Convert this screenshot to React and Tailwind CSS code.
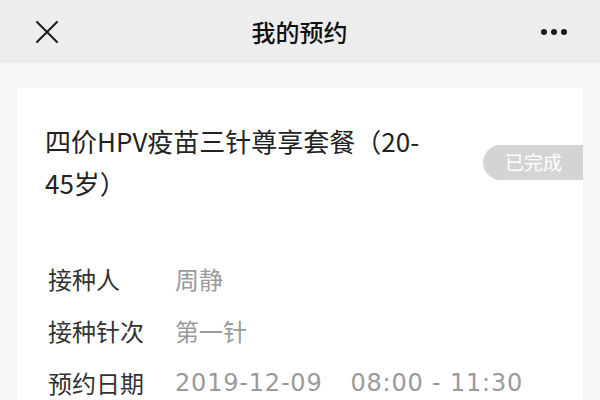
export default function App() {
  const rows = [
    ["接种人", "周静"],
    ["接种针次", "第一针"],
  ];
  return (
    <div
      className="w-[600px] h-[400px] overflow-hidden bg-[#f6f6f8]"
      style={{ fontFamily: '"Noto Sans CJK SC", "Noto Sans", sans-serif' }}
    >
      <header className="h-[63px] bg-[#ededed] flex items-center justify-between pl-[36px] pr-[33px]">
        <svg width="22" height="22" viewBox="0 0 22 22" className="shrink-0">
          <path d="M1 1 L21 21 M21 1 L1 21" stroke="#1c1c1c" strokeWidth="2" strokeLinecap="round" />
        </svg>
        <h1 className="text-[24px] font-medium text-[#111] leading-none">我的预约</h1>
        <div className="flex items-center gap-[4px] w-[26px]">
          <span className="w-[6px] h-[6px] rounded-full bg-[#1a1a1a]" />
          <span className="w-[6px] h-[6px] rounded-full bg-[#1a1a1a]" />
          <span className="w-[6px] h-[6px] rounded-full bg-[#1a1a1a]" />
        </div>
      </header>
      <main className="px-[17px] pt-[25px]">
        <section className="bg-white pt-[32px] pb-[20px]">
          <div className="flex items-center justify-between">
            <h2 className="pl-[28px] text-[26px] leading-[42px] text-[#222]">
              四价HPV疫苗三针尊享套餐（20-
              <br />
              45岁）
            </h2>
            <span className="h-[35px] pl-[22px] pr-[21px] rounded-l-full bg-[#d4d4d4] text-white text-[19px] flex items-center">
              已完成
            </span>
          </div>
          <dl className="pt-[49px] pl-[31px]">
            {rows.map(([k, v]) => (
              <div key={k} className="flex leading-[52px] text-[24px]">
                <dt className="w-[127px] shrink-0 text-[#333]">{k}</dt>
                <dd className="text-[#9a9a9a]">{v}</dd>
              </div>
            ))}
            <div className="flex leading-[52px] text-[24px]">
              <dt className="w-[127px] shrink-0 text-[#333]">预约日期</dt>
              <dd
                className="text-[#9a9a9a] tracking-[0.8px] whitespace-pre"
                style={{ fontFamily: '"DejaVu Sans", sans-serif' }}
              >
                <span>2019-12-09</span>
                <span className="ml-[28px]">08:00 - 11:30</span>
              </dd>
            </div>
          </dl>
        </section>
      </main>
    </div>
  );
}
